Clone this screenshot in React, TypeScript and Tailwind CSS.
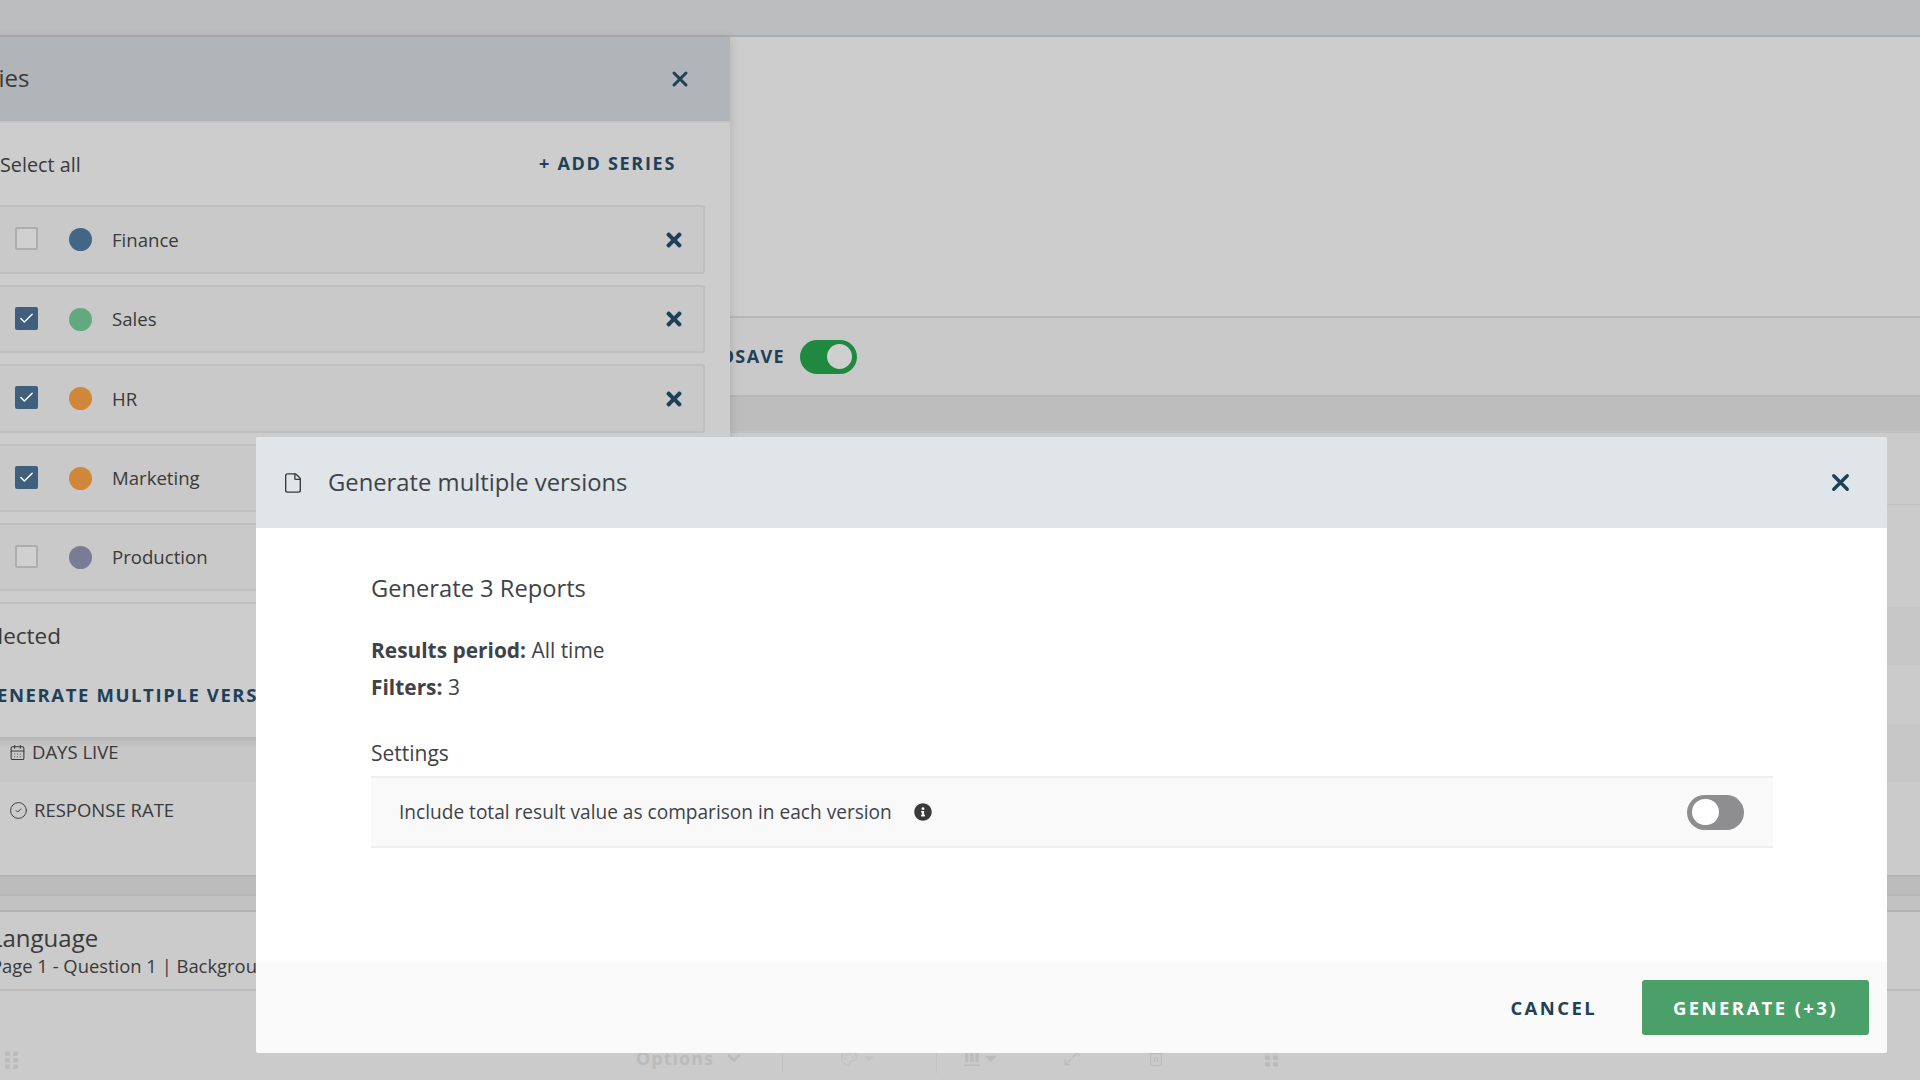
import React from 'react';
import { CalendarDays, Check, ChevronDown, CircleCheck, File, Maximize2, Palette, Trash2, X } from 'lucide-react';
import { FaInfoCircle, FaTimes, FaCaretDown } from 'react-icons/fa';

const series = [
  { name: 'Finance', color: 'bg-[#436586]', checked: false, h: 'h-[69px]' },
  { name: 'Sales', color: 'bg-[#62a97f]', checked: true, h: 'h-[68px]' },
  { name: 'HR', color: 'bg-[#d08739]', checked: true, h: 'h-[69px]' },
  { name: 'Marketing', color: 'bg-[#d08739]', checked: true, h: 'h-[68px]' },
  { name: 'Production', color: 'bg-[#7a7b96]', checked: false, h: 'h-[68px]' },
];

const Grip = ({ className }: { className: string }) => (
  <svg viewBox="0 0 14 18" className={className} fill="currentColor">
    <rect x="0" y="0" width="5" height="4.5" rx="1" />
    <rect x="8" y="0" width="5" height="4.5" rx="1" />
    <rect x="0" y="6.5" width="5" height="4.5" rx="1" />
    <rect x="8" y="6.5" width="5" height="4.5" rx="1" />
    <rect x="0" y="13" width="5" height="4.5" rx="1" />
    <rect x="8" y="13" width="5" height="4.5" rx="1" />
  </svg>
);

const Bars = ({ className }: { className: string }) => (
  <svg viewBox="0 0 16 18" className={className} fill="currentColor">
    <rect x="1" y="0" width="3.4" height="13" />
    <rect x="6.2" y="0" width="3.4" height="13" />
    <rect x="11.4" y="0" width="3.4" height="13" />
    <rect x="0" y="15.5" width="16" height="1.5" />
  </svg>
);

const Background = () => (
  <div className="flex h-[1080px] flex-col bg-[#cbcbcb]">
    <div className="h-[37px] border-b-2 border-[#acadaf] bg-[#bcbdbf]" />
    <div className="h-[281px] border-b-2 border-[#b6b6b6] bg-[#cdcdcd]" />
    <div className="flex h-[79px] items-center gap-[15px] border-b-2 border-[#b6b6b6] bg-[#c9c9c9] pl-[679px]">
      <span className="text-[18px] font-bold tracking-[1.4px] text-[#1f4059]">AUTOSAVE</span>
      <div className="flex h-[34px] w-[57px] items-center justify-end rounded-full bg-[#1f8a3f] px-[5px]">
        <div className="h-[25px] w-[25px] rounded-full bg-[#cfcfcf]" />
      </div>
    </div>
    <div className="h-[36px] border-b-2 border-[#c0c0c0] bg-[#bdbdbd]" />
    <div className="h-[72px] border-b border-[#c1c1c1] bg-[#cbcbcb]" />
    <div className="h-[102px] bg-[#cbcbcb]" />
    <div className="h-[58px] bg-[#c7c7c7]" />
    <div className="h-[59px] bg-[#cbcbcb]" />
    <div className="flex h-[58px] items-center gap-[6px] bg-[#c7c7c7] pb-[2px] pl-[9px] text-[18.5px] text-[#3a3a3a]">
      <CalendarDays className="h-[17px] w-[17px]" strokeWidth={1.5} />
      <span>DAYS LIVE</span>
    </div>
    <div className="flex h-[56px] items-center gap-[6px] bg-[#cbcbcb] pl-[9px] text-[18.5px] text-[#3a3a3a]">
      <CircleCheck className="h-[19px] w-[19px]" strokeWidth={1.2} />
      <span>RESPONSE RATE</span>
    </div>
    <div className="h-[39px] border-b-2 border-[#b4b4b4] bg-[#cbcbcb]" />
    <div className="h-[19px] border-b-2 border-[#b6b6b6] bg-[#bcbcbc]" />
    <div className="h-[16px] border-b-2 border-[#b2b2b2] bg-[#c2c2c2]" />
    <div className="flex h-[79px] flex-col justify-center border-b-2 border-[#bcbcbc] pb-[1px] text-[#3a3a3a]">
      <span className="ml-[-10px] text-[24px] leading-[32px]">Language</span>
      <span className="ml-[-9px] text-[18.4px] leading-[24px]">Page 1 - Question 1 | Background</span>
    </div>
    <div className="flex flex-1 items-end pb-[7px] text-[#bbbbbb]">
      <Grip className="mb-[3px] ml-[5px] h-[19px] w-[14px]" />
      <div className="ml-[617px] flex h-[30px] w-[147px] items-center gap-[10px] border-r border-[#c2c2c2]">
        <span className="text-[18px] font-bold tracking-[1px]">Options</span>
        <ChevronDown className="h-[20px] w-[20px]" strokeWidth={3} />
      </div>
      <div className="flex h-[30px] w-[154px] items-center gap-[4px] border-r border-[#c2c2c2] pl-[57px] text-[#c2c2c2]">
        <Palette className="h-[18px] w-[18px]" />
        <FaCaretDown className="h-[14px] w-[14px]" />
      </div>
      <div className="flex h-[30px] items-center gap-[2px] pl-[27px]">
        <Bars className="h-[18px] w-[16px]" />
        <FaCaretDown className="h-[18px] w-[18px]" />
      </div>
      <Maximize2 className="mb-[6px] ml-[63px] h-[18px] w-[18px]" strokeWidth={2} />
      <Trash2 className="mb-[6px] ml-[66px] h-[18px] w-[18px]" strokeWidth={1.5} />
      <Grip className="mb-[6px] ml-[100px] h-[18px] w-[14px]" />
    </div>
  </div>
);

const SeriesPanel = () => (
  <div className="absolute left-[-30px] top-[37px] h-[700px] w-[760px] overflow-hidden bg-[#cdcdcd] shadow-[0_2px_10px_rgba(0,0,0,0.15)]">
    <div className="flex h-[86px] items-center justify-between border-b-2 border-[#c4c4c4] bg-[#b1b5b9] pr-[38px]">
      <span className="ml-[-8px] mt-[-2px] text-[24px] text-[#3a3a3a]">Series</span>
      <X className="h-[24px] w-[24px] text-[#1f4059]" strokeWidth={3} />
    </div>
    <div className="flex h-[82px] items-center justify-between pl-[30px] pr-[54px] pt-[2px]">
      <span className="text-[19.8px] text-[#3a3a3a]">Select all</span>
      <span className="mt-[-3px] text-[18px] font-bold tracking-[1.7px] text-[#1f4059]">+ ADD SERIES</span>
    </div>
    <div className="flex w-[735px] flex-col gap-[11px]">
      {series.map((s) => (
        <div
          key={s.name}
          className={`flex ${s.h} items-center rounded-[3px] border-2 border-[#bfbfbf] bg-[#c9c9c9] pr-[18px]`}
        >
          <div
            className={`ml-[43px] mt-[-2px] flex h-[23px] w-[23px] items-center justify-center rounded-[2px] ${
              s.checked ? 'bg-[#3f5f7c]' : 'border-2 border-[#adadad] bg-[#d0d0d0]'
            }`}
          >
            {s.checked && <Check className="h-[17px] w-[17px] text-white" strokeWidth={2} />}
          </div>
          <div className={`ml-[31px] h-[23px] w-[23px] rounded-full ${s.color}`} />
          <span className="ml-[20px] flex-1 text-[18.6px] text-[#3a3a3a]">{s.name}</span>
          <FaTimes className="h-[22px] w-[22px] text-[#1f4059]" />
        </div>
      ))}
    </div>
    <div className="mt-[11px] border-t-2 border-[#bfbfbf]">
      <div className="ml-[-82px] mt-[16px] text-[22.5px] leading-[32px] text-[#3a3a3a]">3 series selected</div>
      <div className="ml-[12px] mt-[29px] text-[18.5px] font-bold tracking-[1.6px] text-[#1f4059]">GENERATE MULTIPLE VERSIONS</div>
    </div>
  </div>
);

const GenerateModal = () => (
  <div className="absolute left-[256px] top-[437px] flex h-[616px] w-[1631px] flex-col overflow-hidden rounded-[3px] bg-white">
    <div className="flex h-[91px] items-center bg-[#e0e5e9] pl-[26px] pr-[33px]">
      <File className="h-[22px] w-[22px] text-[#3a3a3a]" strokeWidth={1.5} />
      <span className="ml-[24px] flex-1 text-[23.8px] text-[#3f4347]">Generate multiple versions</span>
      <X className="h-[27px] w-[27px] text-[#1f4059]" strokeWidth={3} />
    </div>
    <div className="flex-1 pl-[115px] pr-[114px] pt-[42px] text-[#3f4347]">
      <div className="text-[23.7px] leading-[36px]">Generate 3 Reports</div>
      <div className="mt-[29px] text-[20.9px] leading-[30px]">
        <b>Results period:</b> All time
      </div>
      <div className="mt-[7px] text-[20.9px] leading-[30px]">
        <b>Filters:</b> 3
      </div>
      <div className="mt-[36px] text-[21px] leading-[30px]">Settings</div>
      <div className="mt-[8px] flex h-[72px] items-center border-y-2 border-[#eeeeee] bg-[#f9f9f9] pl-[28px] pr-[29px]">
        <span className="text-[19.1px]">Include total result value as comparison in each version</span>
        <FaInfoCircle className="ml-[22px] h-[18px] w-[18px] text-[#3a3a3a]" />
        <div className="ml-auto flex h-[35px] w-[57px] items-center rounded-full bg-[#8e8e90] px-[5px]">
          <div className="h-[26px] w-[27px] rounded-full bg-white" />
        </div>
      </div>
    </div>
    <div className="flex h-[91px] items-center justify-end gap-[45px] bg-[#fafafa] pr-[18px]">
      <span className="text-[18.5px] font-bold tracking-[2.4px] text-[#1f4059]">CANCEL</span>
      <div className="flex h-[55px] w-[227px] items-center justify-center rounded-[3px] bg-[#4ba06a] text-[18.5px] font-bold tracking-[2.4px] text-white">
        GENERATE (+3)
      </div>
    </div>
  </div>
);

export default function App() {
  return (
    <div className="relative h-[1080px] w-[1920px] overflow-hidden font-['Open_Sans',sans-serif]">
      <Background />
      <SeriesPanel />
      <GenerateModal />
    </div>
  );
}
